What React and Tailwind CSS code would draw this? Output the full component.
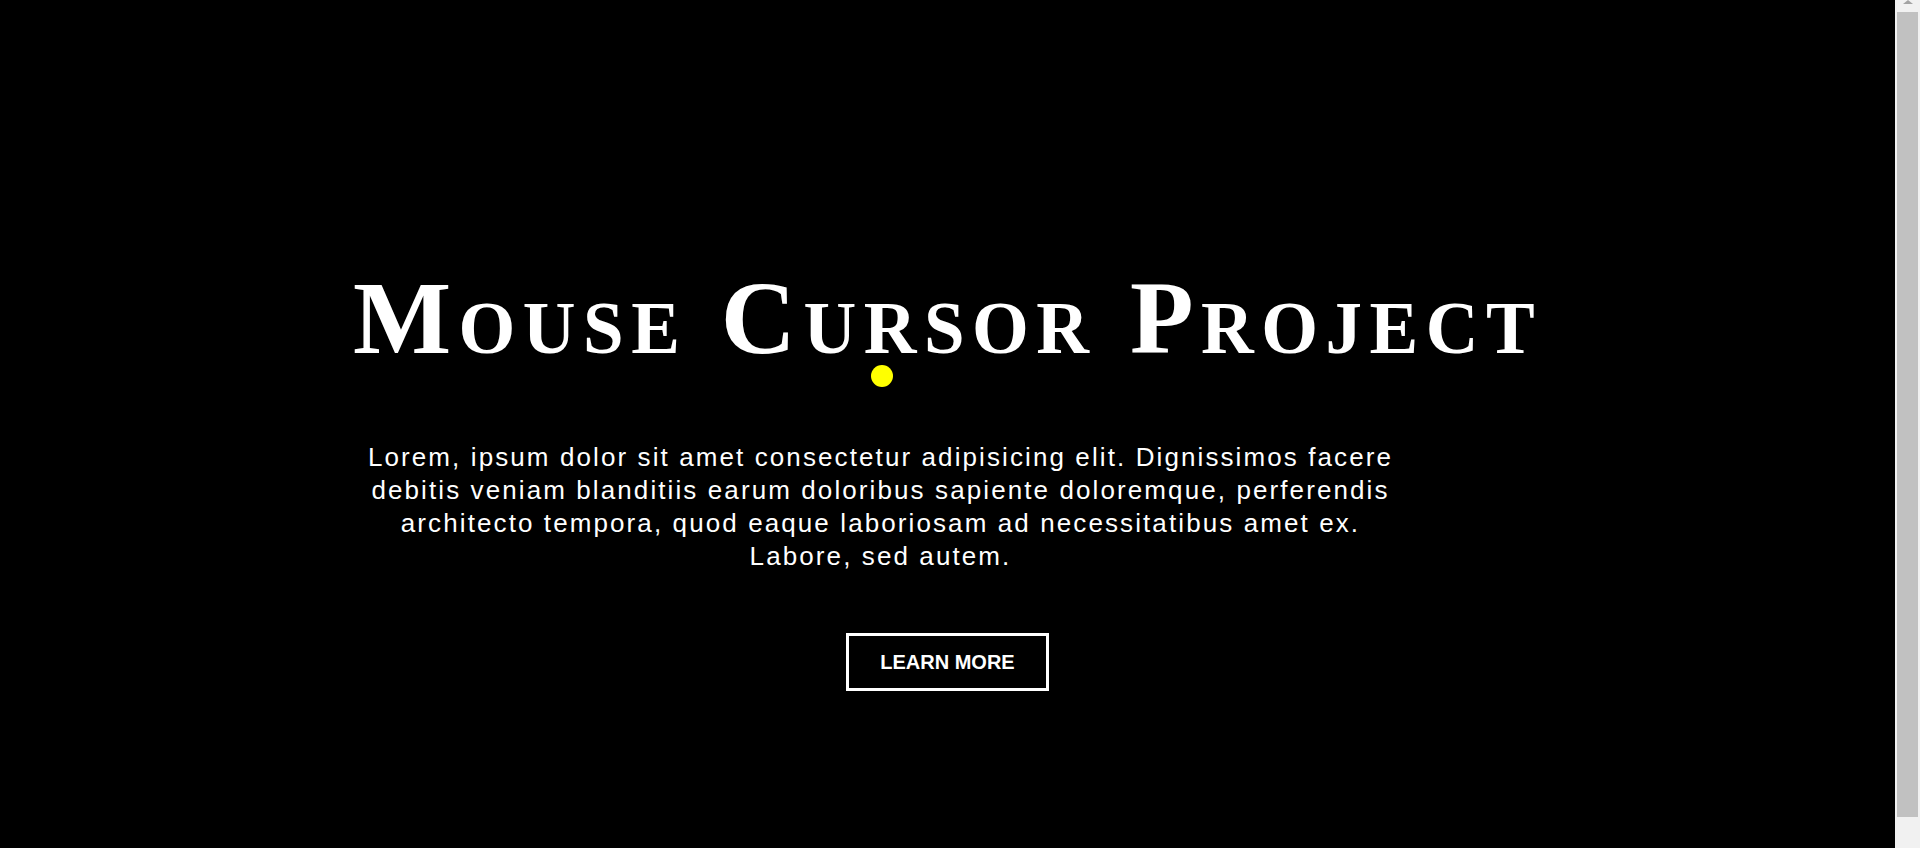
import React from 'react';

function CursorDot() {
  return (
    <div className="pointer-events-none absolute left-[871px] top-[365px] w-[22px] h-[22px] rounded-full bg-[#ffff00]"></div>
  );
}

function ScrollStrip() {
  return (
    <div className="w-[25px] shrink-0 bg-[#f1f1f1] flex flex-col items-center">
      <div className="h-[4px] flex items-end justify-center">
        <div className="w-0 h-0 border-l-[5px] border-r-[5px] border-b-[4px] border-l-transparent border-r-transparent border-b-[#a3a3a3]"></div>
      </div>
      <div className="mt-[8px] h-[805px] w-[21px] bg-[#c1c1c1]"></div>
    </div>
  );
}

export default function App() {
  return (
    <div className="flex h-[848px] overflow-hidden bg-black">
      <main className="relative flex-1 text-white flex flex-col items-center pt-[266px]">
        <h1 className="font-['Liberation_Serif',serif] font-bold text-[104px] leading-none tracking-[7.5px] [font-variant-caps:small-caps] whitespace-nowrap">
          Mouse Cursor Project
        </h1>

        <p className="mt-[71px] mr-[134px] w-[1070px] text-center font-['Liberation_Sans',Arial,sans-serif] text-[26px] leading-[33px] tracking-[2.1px]">
          Lorem, ipsum dolor sit amet consectetur adipisicing elit. Dignissimos facere
          debitis veniam blanditiis earum doloribus sapiente doloremque, perferendis
          architecto tempora, quod eaque laboriosam ad necessitatibus amet ex.
          Labore, sed autem.
        </p>

        <button className="mt-[60px] border-[3px] border-white px-[31px] h-[58px] font-['Liberation_Sans',Arial,sans-serif] font-bold text-[20px] leading-none uppercase">
          Learn more
        </button>

        <CursorDot />
      </main>
      <ScrollStrip />
    </div>
  );
}
